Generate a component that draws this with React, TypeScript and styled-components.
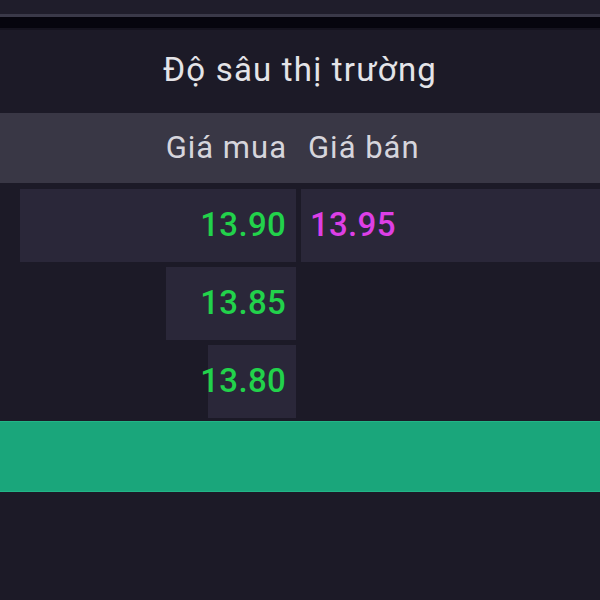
import styled, { createGlobalStyle } from "styled-components";

const GlobalStyle = createGlobalStyle`
  html, body {
    margin: 0;
    padding: 0;
    background: #1c1a27;
  }
  #root {
    width: 600px;
    height: 600px;
    overflow: hidden;
  }
`;

const Page = styled.div`
  width: 600px;
  height: 600px;
  background: #1c1a27;
  display: flex;
  flex-direction: column;
  font-family: Roboto, "Noto Sans", sans-serif;
`;

const TopBar = styled.div`
  height: 14px;
  background: #1f1d2b;
  border-bottom: 3px solid #3a3949;
`;

const Divider = styled.div`
  height: 11px;
  background: #06050e;
  border-bottom: 2px solid #15131f;
`;

const Title = styled.div`
  height: 83px;
  display: flex;
  align-items: center;
  justify-content: center;
  color: #e4e4e8;
  font-size: 33px;
  letter-spacing: 1.2px;
  padding-bottom: 4px;
  box-sizing: border-box;
`;

const HeaderRow = styled.div`
  height: 70px;
  background: #393745;
  display: grid;
  grid-template-columns: 296px 1fr;
  column-gap: 5px;
  align-items: center;
  color: #d6d5dc;
  font-size: 31px;
  letter-spacing: 1px;
`;

const HeadCell = styled.div<{ $side: "buy" | "sell" }>`
  text-align: ${(p) => (p.$side === "buy" ? "right" : "left")};
  padding: ${(p) => (p.$side === "buy" ? "0 9px 0 0" : "0 0 0 7px")};
  padding-bottom: 2px;
`;

const Rows = styled.div`
  display: flex;
  flex-direction: column;
  gap: 5px;
  padding-top: 6px;
`;

const Row = styled.div`
  height: 73px;
  display: grid;
  grid-template-columns: 296px 1fr;
  column-gap: 5px;
`;

const Side = styled.div<{ $side: "buy" | "sell" }>`
  display: flex;
  justify-content: ${(p) => (p.$side === "buy" ? "flex-end" : "flex-start")};
`;

const Bar = styled.div<{ $side: "buy" | "sell" }>`
  height: 100%;
  background: #2a2739;
  display: flex;
  align-items: center;
  justify-content: ${(p) => (p.$side === "buy" ? "flex-end" : "flex-start")};
  padding: ${(p) => (p.$side === "buy" ? "0 10px 0 0" : "0 0 0 9px")};
  box-sizing: border-box;
  flex: ${(p) => (p.$side === "sell" ? "1" : "none")};
`;

const Price = styled.span<{ $side: "buy" | "sell" }>`
  font-size: 33px;
  font-weight: 500;
  letter-spacing: 0.3px;
  color: ${(p) => (p.$side === "buy" ? "#22d24b" : "#dd3fe6")};
  padding-bottom: 2px;
`;

const ActionBar = styled.div`
  margin-top: 3px;
  height: 69px;
  background: #1aa67b;
  border-top: 1px solid #22b587;
  border-bottom: 1px solid #22b587;
`;

const depth = [
  { bid: "13.90", ask: "13.95", bidWidth: 276 },
  { bid: "13.85", ask: "", bidWidth: 130 },
  { bid: "13.80", ask: "", bidWidth: 88 },
];

export default function App() {
  return (
    <Page>
      <GlobalStyle />
      <TopBar />
      <Divider />
      <Title>Độ sâu thị trường</Title>
      <HeaderRow>
        <HeadCell $side="buy">Giá mua</HeadCell>
        <HeadCell $side="sell">Giá bán</HeadCell>
      </HeaderRow>
      <Rows>
        {depth.map((d) => (
          <Row key={d.bid}>
            <Side $side="buy">
              <Bar $side="buy" style={{ width: d.bidWidth }}>
                <Price $side="buy">{d.bid}</Price>
              </Bar>
            </Side>
            <Side $side="sell">
              {d.ask && (
                <Bar $side="sell">
                  <Price $side="sell">{d.ask}</Price>
                </Bar>
              )}
            </Side>
          </Row>
        ))}
      </Rows>
      <ActionBar />
    </Page>
  );
}
